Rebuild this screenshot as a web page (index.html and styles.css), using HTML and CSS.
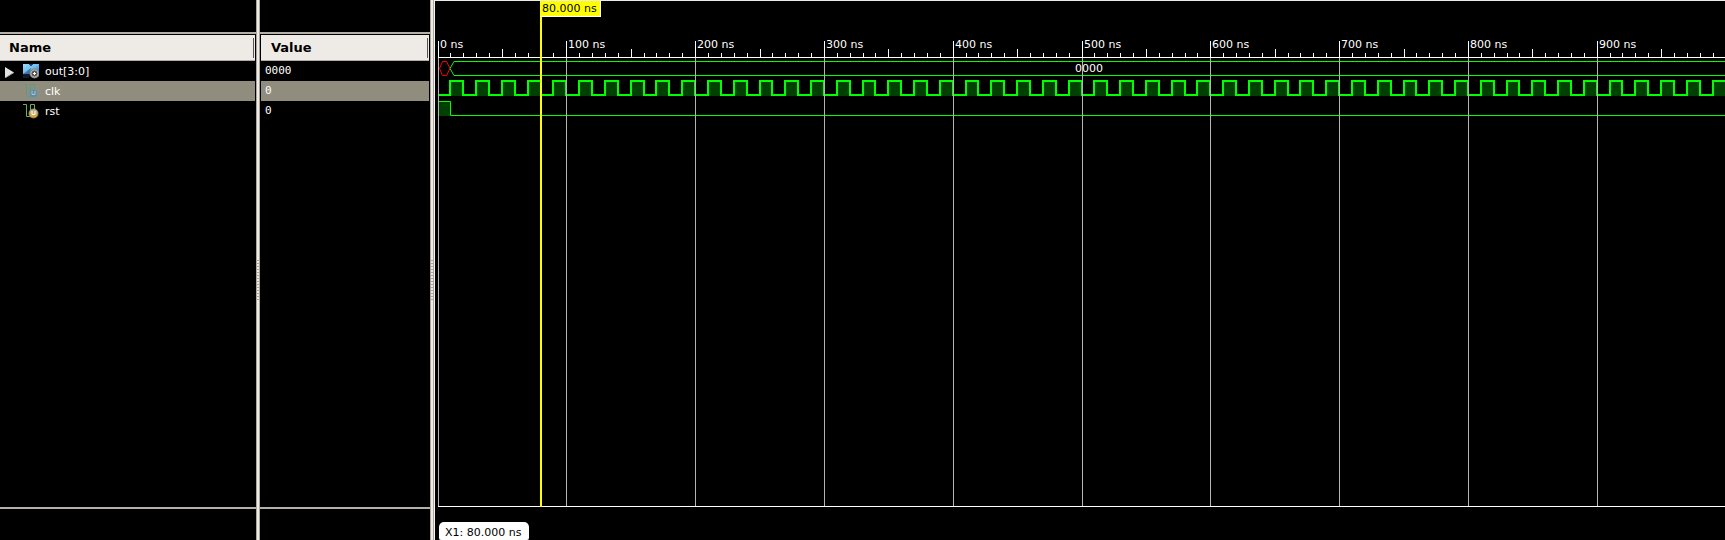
FILE: index.html
```
<!DOCTYPE html>
<html lang="en">
<head>
<meta charset="utf-8">
<title>Waveform viewer</title>
<link rel="stylesheet" href="styles.css">
</head>
<body>
<main class="viewer">
  <section class="pane names">
    <div class="top-strip"></div>
    <h2 class="head">Name</h2>
    <ul class="rows">
      <li class="row">
        <button class="expand" aria-label="Expand out[3:0]"><svg width="9" height="11" viewBox="0 0 9 11"><path d="M0 0L9 5.500L0 11Z" fill="#e2e2e0"/><path d="M0 11L9 5.500" stroke="#9a9a98" fill="none"/></svg></button>
        <svg class="icon" viewBox="0 0 16 16">
          <defs><linearGradient id="blue" x1="0" y1="0" x2="1" y2="1"><stop offset="0" stop-color="#a4dafc"/><stop offset=".5" stop-color="#6cbcf2"/><stop offset="1" stop-color="#1b6bb5"/></linearGradient></defs>
          <path d="M0 1H6L8 3L10 1H16V11H0Z" fill="url(#blue)"/><path d="M6 1H10L8 3Z" fill="#173c60"/>
          <path d="M0 11L8 5L6 15H0Z" fill="#163a60" opacity=".5"/>
          <circle cx="11.500" cy="10.500" r="5" fill="#888"/><circle cx="11.500" cy="10.500" r="3.500" fill="#555" stroke="#b4b4b4"/><path d="M10 10.500H13M11.500 9V12" stroke="#fff"/>
        </svg>
        <span class="label">out[3:0]</span>
      </li>
      <li class="row selected">
        <span class="expand"></span>
        <svg class="icon" viewBox="0 0 16 16">
          <circle cx="10.500" cy="10.500" r="5" fill="#7e9095"/>
          <path d="M0 1.500H3.500V13.500H7.500V1.500H11.500V7" fill="none" stroke="#5b9c86"/>
          <circle cx="10.500" cy="10.500" r="3.500" fill="#5c8ba5"/><path d="M9 8V11.500H12V8" fill="none" stroke="#b4c4cb"/>
        </svg>
        <span class="label">clk</span>
      </li>
      <li class="row">
        <span class="expand"></span>
        <svg class="icon" viewBox="0 0 16 16">
          <circle cx="10.500" cy="10.500" r="5" fill="#77756d"/>
          <path d="M0 1.500H3.500V13.500H7.500V1.500H11.500V7" fill="none" stroke="#6fae57"/>
          <circle cx="10.500" cy="10.500" r="4" fill="#e2a82c"/><path d="M6.500 10.500A4 4 0 0 1 14.500 10.500Z" fill="#b9b29a"/><path d="M9 8V11.500H12V8" fill="none" stroke="#fff"/>
        </svg>
        <span class="label">rst</span>
      </li>
    </ul>
    <div class="foot"></div>
  </section>
  <div class="splitter"></div>
  <section class="pane values">
    <div class="top-strip"></div>
    <h2 class="head">Value</h2>
    <ul class="rows">
      <li class="row">0000</li>
      <li class="row selected">0</li>
      <li class="row">0</li>
    </ul>
    <div class="foot"></div>
  </section>
  <div class="splitter wide"></div>
  <section class="wave">
    <svg class="plot" id="plot" role="img" aria-label="Signal waveforms from 0 ns"></svg>
    <output class="cursor-label">80.000 ns</output>
    <div class="wave-foot"><output class="marker">X1: 80.000 ns</output></div>
  </section>
</main>
<script src="wave.js"></script>
</body>
</html>
```
FILE: styles.css
```
* { box-sizing: border-box; }
body { margin: 0; background: #000; color: #fff; font: 11px/20px "DejaVu Sans", sans-serif; }
.viewer { display: flex; height: 100vh; overflow: hidden; }
.pane { display: flex; flex-direction: column; }
.names { flex: 0 0 256px; padding-right: 1px; }
.values { flex: 0 0 170px; }
.values .head, .values .rows { margin-left: 1px; margin-right: 1px; }
.top-strip { flex: 0 0 34px; border-bottom: 2px solid #b4b0a6; margin-right: -1px; }
.values .top-strip { margin-right: 0; }
.head {
  position: relative;
  margin: 1px 0 0;
  height: 26px;
  padding-left: 9px;
  background: #eeebe6;
  border-bottom: 1px solid #b4aca2;
  color: #000;
  font-size: 13px;
  line-height: 26px;
  font-weight: bold;
}
.values .head { padding-left: 10px; }
.head::after { content: ""; position: absolute; right: 1px; top: 3px; bottom: 2px; width: 1px; background: #555; }
.rows { list-style: none; margin: 0; padding: 0; flex: 1; }
.row { display: flex; align-items: center; height: 20px; }
.names .row { padding-left: 5px; }
.label { line-height: 18px; padding-top: 2px; }
.values .row { padding-left: 4px; font-family: "DejaVu Sans Mono", monospace; }
.selected { background: #918d7e; }
.expand { width: 18px; height: 20px; padding: 2px 0 0; border: 0; background: none; display: flex; align-items: center; }
.icon { width: 16px; height: 16px; margin-right: 6px; }
.foot { flex: 0 0 33px; border-top: 2px solid #b4b0a6; margin-right: -1px; }
.values .foot { margin-right: 0; }
.splitter { flex: 0 0 4px; position: relative; background: #eeebe6; border: solid #aaa59d; border-width: 0 1px; }
.splitter::after {
  content: "";
  position: absolute;
  inset: calc(50% - 10px) 0 auto;
  height: 40px;
  background: repeating-linear-gradient(#aaa59d 0 1px, #eeebe6 1px 3px);
}
.wide { margin-right: 1px; box-shadow: 1px 0 #f6f4f0; }
.wave { position: relative; flex: 1; min-width: 0; display: flex; flex-direction: column; border-top: 1px solid #eeebe6; }
.plot { flex: 1; min-height: 0; width: 100%; display: block; }
.plot text { fill: #fff; font-size: 11px; }
.grid { fill: #b4b4b4; }
.tick { fill: #fff; }
.on { fill: #004000; }
.trace { fill: none; stroke: #0f0; }
.clock { stroke-width: 2; }
.unknown { stroke: #f00; }
.cursor { fill: #ff0; }
.cursor-label { position: absolute; left: 105px; top: 0; height: 16px; padding: 0 3px 0 2px; background: #ff0; border: solid #fff; border-width: 0 1px 1px 0; color: #000; line-height: 16px; }
.wave-foot { flex: 0 0 33px; padding: 15px 0 0 4px; }
.marker { display: block; width: max-content; height: 18px; padding: 0 8px 0 6px; border-radius: 5px 5px 2px 2px; background: #fff; color: #000; line-height: 22px; }
```
FILE: wave.js
```
const plot = document.getElementById("plot");
const origin = 3;
const scale = 1.288;
const x = t => origin + Math.floor(t * scale);

function add(name, attrs, text) {
  const el = document.createElementNS("http://www.w3.org/2000/svg", name);
  for (const key in attrs) el.setAttribute(key, attrs[key]);
  if (text) el.textContent = text;
  plot.appendChild(el);
}

function draw() {
  plot.replaceChildren();
  const { width, height } = plot.getBoundingClientRect();
  const end = (width - origin) / scale;

  add("path", { class: "trace", d: `M${width} 60.500H19L15 67.500L19 74.500H${width}` });
  add("path", { class: "trace unknown", d: "M4.500 67.500L7.500 60.500H11.500L15 67.500L11.500 74.500H7.500Z" });

  let clock = `M${origin + 1} 94`;
  for (let t = 10; t < end; t += 20) {
    const a = x(t), b = x(t + 10);
    add("rect", { class: "on", x: a, y: 80, width: b - a, height: 15 });
    clock += `H${a}V80H${b}V94`;
  }
  add("path", { class: "trace clock", d: clock });

  add("rect", { class: "on", x: origin + 1, y: 100, width: 11, height: 15 });
  add("path", { class: "trace", d: `M${origin + 1} 100.500H15.500V114.500H${width}` });

  add("text", { x: 640, y: 71 }, "0000");

  for (let t = 0; t < end; t += 10) {
    const major = t % 100 === 0;
    const top = major ? 40 : t % 50 === 0 ? 48 : 52;
    if (major) {
      add("rect", { class: "grid", x: x(t), y: 56, width: 1, height: height - 56 });
      add("text", { x: x(t) + 2, y: 47 }, t + " ns");
    }
    add("rect", { class: "tick", x: x(t), y: top, width: 1, height: 57 - top });
  }
  add("rect", { class: "tick", x: origin, y: 56, width, height: 1 });
  add("rect", { class: "tick", x: origin, y: height - 1, width, height: 1 });
  add("rect", { class: "cursor", x: x(80) - 1, y: 16, width: 2, height: height - 16 });
}

draw();
addEventListener("resize", draw);
```
